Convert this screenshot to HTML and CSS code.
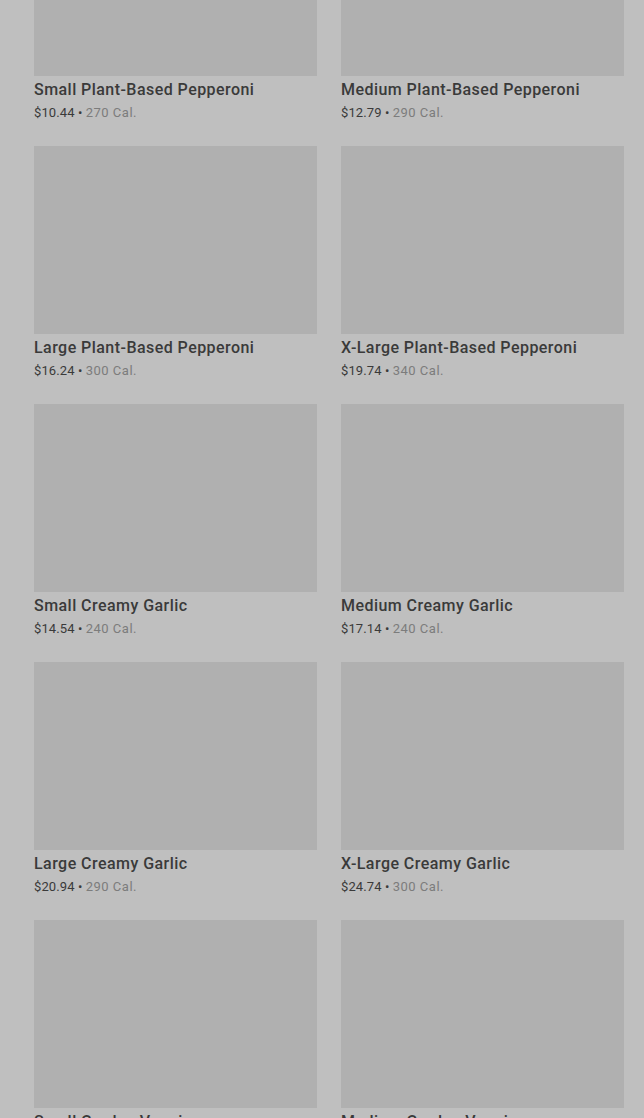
FILE: index.html
```html
<!DOCTYPE html>
<html>
<head>
<meta charset="utf-8">
<link rel="stylesheet" href="styles.css">
</head>
<body>
<div class="grid">
  <div class="card"><div class="img"></div><div class="title">Small Plant-Based Pepperoni</div><div class="meta"><span class="price">$10.44</span> • <span class="cal">270 Cal.</span></div></div>
  <div class="card"><div class="img"></div><div class="title">Medium Plant-Based Pepperoni</div><div class="meta"><span class="price">$12.79</span> • <span class="cal">290 Cal.</span></div></div>
  <div class="card"><div class="img"></div><div class="title">Large Plant-Based Pepperoni</div><div class="meta"><span class="price">$16.24</span> • <span class="cal">300 Cal.</span></div></div>
  <div class="card"><div class="img"></div><div class="title">X-Large Plant-Based Pepperoni</div><div class="meta"><span class="price">$19.74</span> • <span class="cal">340 Cal.</span></div></div>
  <div class="card"><div class="img"></div><div class="title">Small Creamy Garlic</div><div class="meta"><span class="price">$14.54</span> • <span class="cal">240 Cal.</span></div></div>
  <div class="card"><div class="img"></div><div class="title">Medium Creamy Garlic</div><div class="meta"><span class="price">$17.14</span> • <span class="cal">240 Cal.</span></div></div>
  <div class="card"><div class="img"></div><div class="title">Large Creamy Garlic</div><div class="meta"><span class="price">$20.94</span> • <span class="cal">290 Cal.</span></div></div>
  <div class="card"><div class="img"></div><div class="title">X-Large Creamy Garlic</div><div class="meta"><span class="price">$24.74</span> • <span class="cal">300 Cal.</span></div></div>
  <div class="card"><div class="img"></div><div class="title">Small Garden Veggie</div><div class="meta"><span class="price">$12.24</span> • <span class="cal">200 Cal.</span></div></div>
  <div class="card"><div class="img"></div><div class="title">Medium Garden Veggie</div><div class="meta"><span class="price">$14.74</span> • <span class="cal">210 Cal.</span></div></div>
</div>
</body>
</html>
```

FILE: styles.css
```css
html, body {
  margin: 0;
  padding: 0;
  background: #bfbfbf;
  height: 1118px;
  overflow: hidden;
}
body {
  font-family: Roboto, "Liberation Sans", sans-serif;
}
.grid {
  display: grid;
  grid-template-columns: 283px 283px;
  column-gap: 24px;
  row-gap: 26px;
  padding: 0 20px 0 34px;
  margin-top: -112px;
}
.img {
  height: 188px;
  background: #b0b0b0;
}
.title {
  margin-top: 4px;
  font-size: 16px;
  line-height: 20px;
  font-weight: 500;
  letter-spacing: 0.45px;
  color: #3a3a3a;
  white-space: nowrap;
}
.meta {
  margin-top: 6px;
  font-size: 13px;
  line-height: 14px;
  color: #3a3a3a;
  white-space: nowrap;
  letter-spacing: 0.1px;
}
.cal {
  color: #7c7c7c;
  letter-spacing: 0.5px;
}
```
